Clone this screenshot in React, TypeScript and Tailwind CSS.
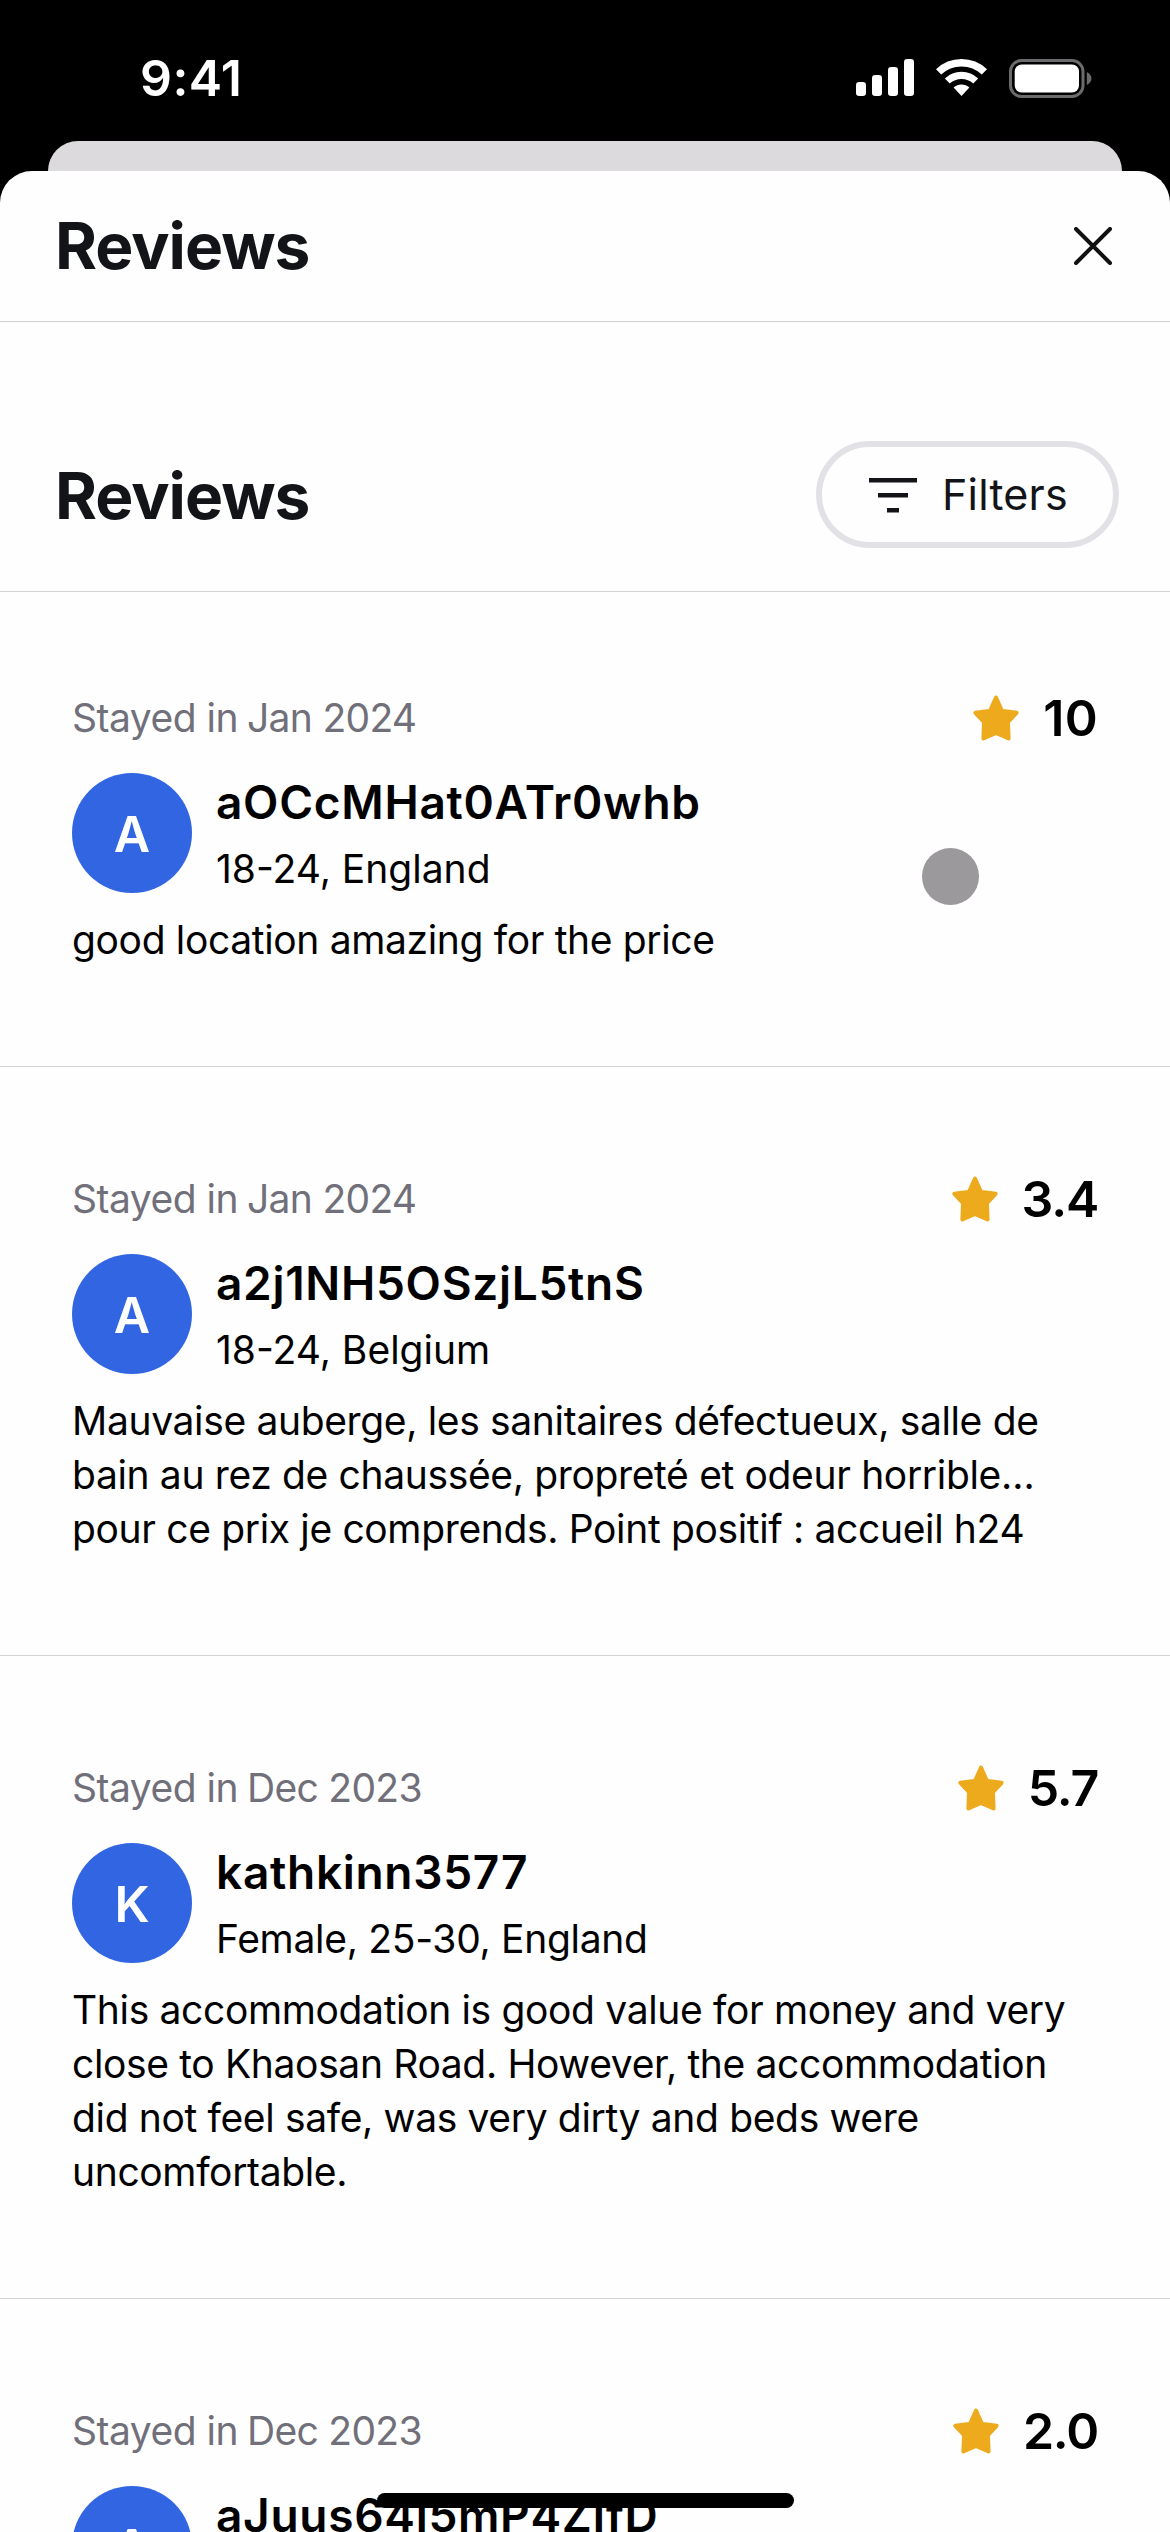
type Review = {
    stayed: string;
    score: string;
    name: string;
    details: string;
    lines: string[];
};

const REVIEWS: Review[] = [
    {
        stayed: "Jan 2024",
        score: "10",
        name: "aOCcMHat0ATr0whb",
        details: "18-24, England",
        lines: ["good location amazing for the price"],
    },
    {
        stayed: "Jan 2024",
        score: "3.4",
        name: "a2j1NH5OSzjL5tnS",
        details: "18-24, Belgium",
        lines: [
            "Mauvaise auberge, les sanitaires défectueux, salle de",
            "bain au rez de chaussée, propreté et odeur horrible…",
            "pour ce prix je comprends. Point positif : accueil h24",
        ],
    },
    {
        stayed: "Dec 2023",
        score: "5.7",
        name: "kathkinn3577",
        details: "Female, 25-30, England",
        lines: [
            "This accommodation is good value for money and very",
            "close to Khaosan Road. However, the accommodation",
            "did not feel safe, was very dirty and beds were",
            "uncomfortable.",
        ],
    },
    {
        stayed: "Dec 2023",
        score: "2.0",
        name: "aJuus64l5mP4ZIfD",
        details: "",
        lines: [],
    },
];

function StatusBar() {
    return (
        <div className="flex h-[141px] items-start justify-between pl-[140px] pr-[78px]">
            <span className="mt-[48px] text-[50px] font-semibold leading-[60px] tracking-[0.4px] text-white">9:41</span>
            <div className="mt-[59px] flex items-start">
                <svg className="h-[37px] w-[58px]" viewBox="0 0 58 37" fill="#fff">
                    <rect x="0" y="23" width="10" height="14" rx="3.2" />
                    <rect x="16" y="16" width="10" height="21" rx="3.2" />
                    <rect x="32" y="8" width="10" height="29" rx="3.2" />
                    <rect x="48" y="0" width="10" height="37" rx="3.2" />
                </svg>
                <svg className="ml-[22px] h-[37px] w-[51px]" viewBox="0 0 51 37" fill="none" stroke="#fff">
                    <path d="M2.6 12.9A33.3 33.3 0 0 1 48.4 12.9" strokeWidth="7.5" />
                    <path d="M11.3 22A20.7 20.7 0 0 1 39.7 22" strokeWidth="7.2" />
                    <path d="M25.5 37L17.6 28.6A11.5 11.5 0 0 1 33.4 28.6Z" fill="#fff" stroke="none" />
                </svg>
                <svg className="ml-[22px] h-[39px] w-[83px]" viewBox="0 0 83 39">
                    <rect x="1.5" y="1.5" width="72.5" height="36" rx="11" fill="none" stroke="#6b6a6c" strokeWidth="3" />
                    <rect x="5.7" y="5.5" width="64.3" height="28" rx="7" fill="#fff" />
                    <path d="M77.8 13V26C80.6 24.8 82.5 22.3 82.5 19.5S80.6 14.2 77.8 13Z" fill="#6b6a6c" />
                </svg>
            </div>
        </div>
    );
}

function Star() {
    return (
        <svg className="h-[46px] w-[46px]" viewBox="0 0 46 46" fill="#ecaa1c" stroke="#ecaa1c" strokeWidth="4" strokeLinejoin="round">
            <path d="M23 2.5L28.5 14.8Q29 15.8 30.1 16L43.6 17.8L35.6 26.4Q34.9 27.2 35 28.2L35.6 43.4L24.6 38.6Q23 38 21.4 38.6L10.400 43.400L11 28.200Q11.100 27.200 10.400 26.400L2.400 17.800L15.900 16Q17 15.800 17.500 14.800Z" />
        </svg>
    );
}

function ReviewItem({ review, first }: { review: Review; first: boolean }) {
    const decimal = review.score.includes(".");
    const hasGender = /^(Female|Male)/.test(review.details);

    return (
        <article className={`border-t border-[#d2d2d5] px-[72px] pb-[99px] ${first ? "pt-[98px]" : "pt-[104px]"}`}>
            <div className="flex h-[56px] items-center justify-between">
                <p className="flex gap-[9px] text-[39px] tracking-[-0.5px] text-[#706f7a]">
                    <span>Stayed in</span>
                    <span className="tracking-[-0.7px]">{review.stayed}</span>
                </p>
                <div className="flex items-center gap-[24px]">
                    <Star />
                    <span className={`text-[50px] font-semibold leading-[56px] ${decimal ? "tracking-[-1.2px]" : "tracking-[0.3px]"}`}>
                        {review.score}
                    </span>
                </div>
            </div>

            <div className="mt-[27px] flex h-[120px] gap-[24px]">
                <div className="flex h-[120px] w-[120px] flex-shrink-0 items-center justify-center rounded-full bg-[#3165e2] pt-[2px] text-[50px] font-semibold text-white">
                    {review.name[0].toUpperCase()}
                </div>
                <div>
                    <h3 className="whitespace-nowrap text-[46px] font-semibold leading-[58px] tracking-[0.7px]">{review.name}</h3>
                    <p className={`mt-[8px] whitespace-nowrap text-[39px] leading-[60px] ${hasGender ? "tracking-[-0.3px]" : ""}`}>
                        {review.details}
                    </p>
                </div>
            </div>

            <p className="mt-[20px] whitespace-nowrap text-[39px] leading-[54px] tracking-[-0.35px]">
                {review.lines.map(line => (
                    <span key={line} className="block">{line}</span>
                ))}
            </p>
        </article>
    );
}

export default function App() {
    return (
        <div className="relative flex h-[2532px] w-[1170px] flex-col overflow-hidden bg-black font-['Inter',sans-serif] text-black">
            <StatusBar />

            {/* Screen stacked behind the sheet */}
            <div className="mx-[48px] h-[30px] flex-shrink-0 rounded-t-[32px] bg-[#dcdadd]" />

            <main className="flex-1 overflow-hidden rounded-t-[32px] bg-[#fefefe]">
                <header className="flex h-[151px] items-center justify-between border-b border-[#d0d0d3] pl-[55px] pr-[58px]">
                    <h1 className="text-[64px] font-bold tracking-[-1px] text-[#131417]">Reviews</h1>
                    <button aria-label="Close">
                        <svg className="h-[38px] w-[38px]" viewBox="0 0 38 38" stroke="#111" strokeWidth="4" strokeLinecap="round">
                            <path d="M2 2L36 36M36 2L2 36" />
                        </svg>
                    </button>
                </header>

                <div className="flex h-[269px] items-start justify-between pl-[55px] pr-[51px] pt-[119px]">
                    <h2 className="mt-px text-[64px] font-bold leading-[107px] tracking-[-1px] text-[#131417]">Reviews</h2>
                    <button className="flex h-[107px] w-[303px] items-center gap-[25px] rounded-full border-[6px] border-[#e2e1e5] pl-[47px] text-[43px] tracking-[0.2px] text-[#131417]">
                        <svg className="h-[48px] w-[48px]" viewBox="0 0 48 48" fill="#131417">
                            <rect x="0" y="7" width="48" height="4.5" />
                            <rect x="9" y="22" width="30" height="4.5" />
                            <rect x="18" y="37" width="12" height="4.5" />
                        </svg>
                        <span>Filters</span>
                    </button>
                </div>

                {REVIEWS.map((review, i) => (
                    <ReviewItem key={review.name} review={review} first={i === 0} />
                ))}
            </main>

            {/* Touch pointer */}
            <div className="absolute left-[922px] top-[848px] h-[57px] w-[57px] rounded-full bg-[#9c999c]" />

            {/* Home indicator */}
            <div className="absolute left-[377px] top-[2493px] h-[15px] w-[417px] rounded-full bg-black" />
        </div>
    );
}
